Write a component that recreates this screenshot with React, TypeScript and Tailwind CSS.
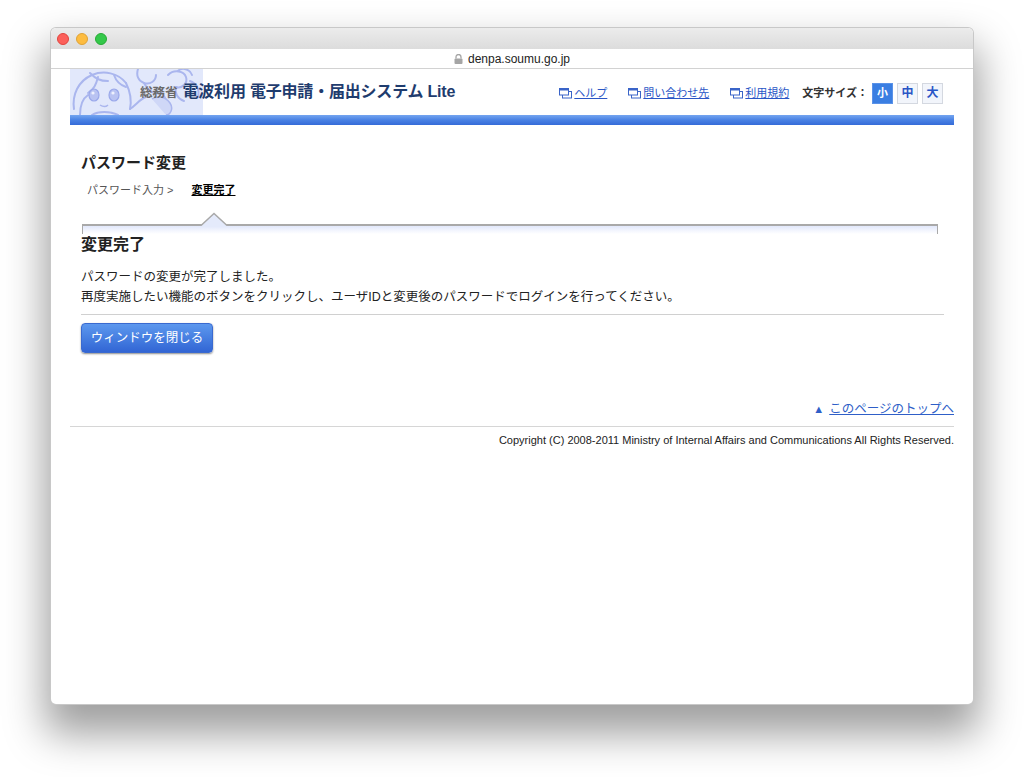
const font = { fontFamily: '"Liberation Sans", "Noto Sans CJK JP", sans-serif' }

function WinIcon() {
	return (
		<svg width="14" height="11" viewBox="0 0 14 11" className="mr-[1px] shrink-0">
			<rect x="3.5" y="3.5" width="9" height="6.5" fill="#fff" stroke="#3a64c8" />
			<rect x="0.5" y="0.5" width="9" height="6.5" fill="#fff" stroke="#3a64c8" />
			<rect x="0.5" y="0.5" width="9" height="2" fill="#3a64c8" />
		</svg>
	)
}

function Mascot() {
	return (
		<svg width="133" height="46" viewBox="0 0 133 46" className="absolute left-0 top-0">
			<rect width="133" height="46" fill="#e2e8fb" />
			<g fill="none" stroke="#aab6ee" strokeWidth="2" strokeLinecap="round">
				<path d="M4 40 C2 26 8 12 22 6 C34 1 48 4 56 14" />
				<path d="M10 46 C10 36 12 30 18 26" />
				<path d="M20 4 C26 10 30 12 38 12" />
				<path d="M56 14 C60 22 62 30 60 40" />
				<path d="M28 8 C26 16 24 20 18 24" />
				<path d="M44 6 C46 12 50 16 56 18" />
				<path d="M22 46 C28 42 40 42 48 46" />
				<path d="M60 40 C66 36 70 30 76 28" />
				<path d="M68 0 C66 6 68 12 74 14 C80 16 86 12 86 6" />
				<path d="M74 14 C78 22 84 26 92 24" />
				<path d="M98 6 C104 0 114 2 116 8 C118 14 112 20 106 18" />
				<path d="M108 2 C112 -2 120 0 122 6" />
				<path d="M92 24 C96 30 100 36 98 46" />
				<path d="M106 18 C104 24 108 30 114 32" />
				<path d="M120 12 C126 14 130 20 128 28" />
			</g>
			<g fill="#b9c3f2" stroke="#9aa8ea" strokeWidth="1.2">
				<ellipse cx="24" cy="26" rx="5" ry="6" />
				<ellipse cx="44" cy="26" rx="5" ry="6" />
			</g>
			<g fill="#eef1fd">
				<circle cx="23" cy="24" r="1.6" />
				<circle cx="43" cy="24" r="1.6" />
			</g>
			<path d="M30 36 C33 38 36 38 38 36" fill="none" stroke="#aab6ee" strokeWidth="1.5" />
			<path d="M82 30 C88 26 96 28 100 34 C104 40 100 46 96 46" fill="#cfd7f7" stroke="#aab6ee" strokeWidth="1.5" />
		</svg>
	)
}

export default function App() {
	return (
		<div className="min-h-[777px] bg-white pt-[28px] pl-[51px]" style={font}>
			<div className="w-[922px] h-[676px] rounded-[5px] overflow-hidden bg-white flex flex-col shadow-[0_24px_40px_6px_rgba(0,0,0,0.38)] ring-1 ring-[#c8c8c8]">
				{/* title bar */}
				<div className="h-[21px] bg-gradient-to-b from-[#ececec] to-[#dcdcdc] flex items-center pl-[6px] gap-[7px]">
					<span className="w-[12px] h-[12px] rounded-full bg-[#fc605b] border border-[#e0443e]" />
					<span className="w-[12px] h-[12px] rounded-full bg-[#fdbc40] border border-[#dea236]" />
					<span className="w-[12px] h-[12px] rounded-full bg-[#34c84a] border border-[#27aa35]" />
				</div>
				<div className="h-[20px] bg-white border-b border-[#d2d2d2] flex items-center justify-center text-[12px] text-[#222]">
					<svg width="9" height="10" viewBox="0 0 9 10" className="mr-[5px]">
						<path d="M2 4.5 V3 a2.5 2.5 0 0 1 5 0 V4.5" fill="none" stroke="#a5a5a5" strokeWidth="1.3" />
						<rect x="0.5" y="4.5" width="8" height="5.5" rx="1" fill="#a5a5a5" />
					</svg>
					denpa.soumu.go.jp
				</div>

				{/* page */}
				<div className="flex-1 px-[19px]">
					<div className="h-[46px] flex items-center">
						<div className="relative h-[46px] w-[420px] flex items-center">
							<Mascot />
							<span className="relative ml-[70px] text-[12.5px] font-bold text-[#6a6a6a] mt-[2px]">総務省</span>
							<span className="relative ml-[5px] text-[16px] font-bold text-[#1f3c6e] tracking-[-0.2px]">電波利用 電子申請・届出システム Lite</span>
						</div>
						<div className="ml-auto flex items-center text-[11px] pr-[11px] pt-[2px]">
							<a className="flex items-center text-[#2a56c6] underline">
								<WinIcon />
								ヘルプ
							</a>
							<a className="flex items-center text-[#2a56c6] underline ml-[21px]">
								<WinIcon />
								問い合わせ先
							</a>
							<a className="flex items-center text-[#2a56c6] underline ml-[21px]">
								<WinIcon />
								利用規約
							</a>
							<span className="ml-[13px] font-bold text-[#333]">文字サイズ：</span>
							<span className="ml-[4px] w-[21px] h-[21px] flex items-center justify-center bg-[#3a7ee2] border border-[#5a92e8] text-white font-bold text-[11px]">小</span>
							<span className="ml-[4px] w-[21px] h-[21px] flex items-center justify-center bg-[#f2f5fb] border border-[#d4d8e0] text-[#2a56c6] font-bold text-[12px]">中</span>
							<span className="ml-[4px] w-[21px] h-[21px] flex items-center justify-center bg-[#f2f5fb] border border-[#d4d8e0] text-[#2a56c6] font-bold text-[12px]">大</span>
						</div>
					</div>
					<div className="h-[10px] bg-gradient-to-b from-[#74a5f0] via-[#4a82e4] to-[#356bd8]" />

					<div className="pl-[11px] pr-[10px]">
						<h2 className="mt-[28px] text-[15px] leading-[20px] font-bold text-[#222]">パスワード変更</h2>
						<div className="mt-[9px] flex items-center text-[11px] leading-[16px] pl-[6px]">
							<span className="text-[#555]">パスワード入力 &gt;</span>
							<span className="ml-[18px] font-bold text-black underline">変更完了</span>
						</div>
						<div className="relative mt-[26px] ml-[1px] mr-[6px] h-[10px] border-t-[2px] border-x border-[#a9a9a9] bg-gradient-to-b from-[#e2e8fb] to-white">
							<svg width="26" height="15" viewBox="0 0 26 15" className="absolute left-[118px] top-[-14px]">
								<polygon points="0,14 13,1.5 26,14 26,15 0,15" fill="#e4eafb" />
								<polyline points="0,13.5 13,1.5 26,13.5" fill="none" stroke="#a9a9a9" strokeWidth="1.5" />
							</svg>
						</div>
						<h3 className="mt-[0px] text-[16px] leading-[22px] font-bold text-[#222]">変更完了</h3>
						<div className="mt-[11px] text-[12.5px] leading-[20px] text-[#222]">
							<p>パスワードの変更が完了しました。</p>
							<p>再度実施したい機能のボタンをクリックし、ユーザIDと変更後のパスワードでログインを行ってください。</p>
						</div>
						<div className="mt-[7px] h-px bg-[#d0d0d0]" />
						<button className="mt-[8px] w-[132px] h-[30px] rounded-[4px] bg-gradient-to-b from-[#5d98ee] to-[#3265d4] text-white text-[12.5px] shadow-[0_1px_2px_rgba(0,0,0,0.45)] border border-[#3a6ad0]">
							ウィンドウを閉じる
						</button>
					</div>

					<div className="mt-[47px] flex justify-end items-center text-[12.5px] leading-[18px]">
						<span className="text-[#2f5fc8] text-[11px] mr-[5px]">▲</span>
						<a className="text-[#2f5fc8] underline">このページのトップへ</a>
					</div>
					<div className="mt-[8px] h-px bg-[#d6d6d6]" />
					<p className="mt-[5px] text-right text-[11px] leading-[16px] text-[#222]">
						Copyright (C) 2008-2011 Ministry of Internal Affairs and Communications All Rights Reserved.
					</p>
				</div>
			</div>
		</div>
	)
}
